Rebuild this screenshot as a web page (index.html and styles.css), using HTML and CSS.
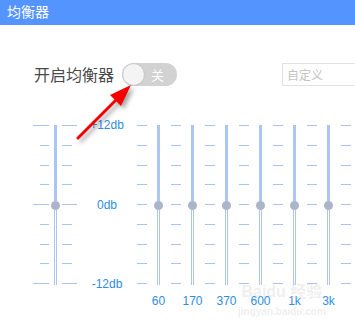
FILE: index.html
```html
<!DOCTYPE html>
<html lang="zh-CN">
<head>
    <meta charset="UTF-8">
    <title>均衡器</title>
    <link rel="stylesheet" href="styles.css">
</head>
<body>
    <header class="header">均衡器</header>

    <div class="controls">
        <span class="switch-label">开启均衡器</span>
        <div class="toggle">
            <span class="knob"></span>
            <span class="toggle-text">关</span>
        </div>
        <div class="preset">自定义</div>
    </div>

    <div class="eq">
        <div class="preamp">
            <div class="scale scale-left">
                <i class="long"></i><i></i><i></i><i></i><i class="long"></i><i></i><i></i><i></i><i class="long"></i>
            </div>
            <div class="slider">
                <div class="track"><span class="fill"></span><span class="thumb"></span><span class="rest"></span></div>
            </div>
            <div class="scale scale-right">
                <i class="long"></i><i></i><i></i><i></i><i class="long"></i><i></i><i></i><i></i><i class="long"></i>
            </div>
        </div>

        <div class="db-labels">
            <span>+12db</span>
            <span>0db</span>
            <span>-12db</span>
        </div>

        <div class="band">
            <div class="scale"><i></i><i></i><i></i><i></i><i></i><i></i><i></i><i></i><i></i></div>
            <div class="slider">
                <div class="track"><span class="fill"></span><span class="thumb"></span><span class="rest"></span></div>
                <span class="freq">60</span>
            </div>
        </div>
        <div class="band">
            <div class="scale"><i></i><i></i><i></i><i></i><i></i><i></i><i></i><i></i><i></i></div>
            <div class="slider">
                <div class="track"><span class="fill"></span><span class="thumb"></span><span class="rest"></span></div>
                <span class="freq">170</span>
            </div>
        </div>
        <div class="band">
            <div class="scale"><i></i><i></i><i></i><i></i><i></i><i></i><i></i><i></i><i></i></div>
            <div class="slider">
                <div class="track"><span class="fill"></span><span class="thumb"></span><span class="rest"></span></div>
                <span class="freq">370</span>
            </div>
        </div>
        <div class="band">
            <div class="scale"><i></i><i></i><i></i><i></i><i></i><i></i><i></i><i></i><i></i></div>
            <div class="slider">
                <div class="track"><span class="fill"></span><span class="thumb"></span><span class="rest"></span></div>
                <span class="freq">600</span>
            </div>
        </div>
        <div class="band">
            <div class="scale"><i></i><i></i><i></i><i></i><i></i><i></i><i></i><i></i><i></i></div>
            <div class="slider">
                <div class="track"><span class="fill"></span><span class="thumb"></span><span class="rest"></span></div>
                <span class="freq">1k</span>
            </div>
        </div>
        <div class="band">
            <div class="scale"><i></i><i></i><i></i><i></i><i></i><i></i><i></i><i></i><i></i></div>
            <div class="slider">
                <div class="track"><span class="fill"></span><span class="thumb"></span><span class="rest"></span></div>
                <span class="freq">3k</span>
            </div>
        </div>
        <div class="scale"><i></i><i></i><i></i><i></i><i></i><i></i><i></i><i></i><i></i></div>
    </div>

    <!-- annotation arrow drawn over the screenshot -->
    <svg class="arrow" width="355" height="333" viewBox="0 0 355 333">
        <line x1="78" y1="138" x2="118" y2="98" stroke="#f40000" stroke-width="3" stroke-linecap="round"/>
        <polygon points="131,85 110,95 121,106" fill="#f40000"/>
    </svg>

    <div class="watermark">
        <span class="wm-logo">Bai<b>du</b> 经验</span>
        <span class="wm-url">jingyan.baidu.com</span>
    </div>
</body>
</html>
```

FILE: styles.css
```css
body {
    margin: 0;
    width: 355px;
    height: 333px;
    overflow: hidden;
    background: #ffffff;
    font-family: "Liberation Sans", "Noto Sans CJK SC", sans-serif;
    position: relative;
}

.header {
    height: 25px;
    line-height: 22px;
    padding-left: 7px;
    background: #5494ff;
    color: #ffffff;
    font-size: 14px;
    font-family: "Noto Sans CJK SC", sans-serif;
}

.controls {
    display: flex;
    align-items: center;
    height: 24px;
    padding: 37px 0 0 34px;
    overflow: hidden;
}

.controls > * {
    flex-shrink: 0;
    white-space: nowrap;
}

.switch-label {
    font-family: "Noto Sans CJK SC", sans-serif;
    font-size: 16px;
    color: #4a4a4a;
    margin-right: 8px;
}

.toggle {
    width: 55px;
    height: 23px;
    border-radius: 12px;
    background: #d2d2d2;
    display: flex;
    align-items: center;
}

.knob {
    width: 21px;
    height: 21px;
    margin-left: 1px;
    border-radius: 50%;
    background: #f4f4f4;
    box-shadow: 0 0 2px rgba(0, 0, 0, 0.15);
}

.toggle-text {
    margin-left: 7px;
    color: #ffffff;
    font-size: 13px;
    font-family: "Noto Sans CJK SC", sans-serif;
}

.preset {
    margin-left: 105px;
    width: 69px;
    height: 21px;
    line-height: 21px;
    border: 1px solid #e2e2e2;
    border-right: none;
    padding-left: 4px;
    font-size: 12px;
    color: #c4c4c4;
    font-family: "Noto Sans CJK SC", sans-serif;
}

.eq {
    display: flex;
    align-items: flex-start;
    margin-top: 39px;
    padding-left: 33px;
}

.eq > * {
    flex-shrink: 0;
}

.preamp {
    display: flex;
    gap: 2px;
}

.scale {
    display: flex;
    flex-direction: column;
    justify-content: space-between;
    height: 159px;
    width: 10px;
}

.scale i {
    display: block;
    height: 1px;
    width: 10px;
    background: #abc3f2;
}

.scale-left {
    width: 16px;
    align-items: flex-end;
}

.scale-left i {
    width: 9px;
}

.scale-right {
    width: 15px;
    align-items: flex-start;
}

.scale-left i.long {
    width: 16px;
}

.scale-right i.long {
    width: 15px;
}

.slider {
    width: 9px;
    display: flex;
    flex-direction: column;
    align-items: center;
}

.track {
    height: 160px;
    display: flex;
    flex-direction: column;
    align-items: center;
}

.fill {
    width: 3px;
    flex: 1;
    background: #abc5f4;
}

.thumb {
    width: 9px;
    height: 9px;
    border-radius: 50%;
    background: #abb4c9;
}

.rest {
    width: 1px;
    flex: 1;
    border-left: 1px solid #abc5f4;
    border-right: 1px solid #abc5f4;
}

.db-labels {
    width: 60px;
    height: 173px;
    margin-top: -7px;
    display: flex;
    flex-direction: column;
    justify-content: space-between;
    align-items: center;
    font-size: 12px;
    line-height: 14px;
    color: #2b8ee6;
}

.band {
    display: flex;
    gap: 7px;
    width: 34px;
}

.freq {
    margin-top: 9px;
    font-size: 12px;
    line-height: 14px;
    color: #2b8ee6;
    white-space: nowrap;
}

.arrow {
    position: absolute;
    left: 0;
    top: 0;
    filter: drop-shadow(3px 3px 2px rgba(0, 0, 0, 0.35));
}

.watermark {
    position: absolute;
    left: 238px;
    top: 283px;
    display: flex;
    flex-direction: column;
    align-items: center;
    color: rgba(200, 200, 200, 0.3);
    font-weight: bold;
}

.wm-logo {
    font-size: 16px;
    line-height: 18px;
}

.wm-url {
    font-size: 10px;
    line-height: 14px;
    margin-top: 4px;
}
```
